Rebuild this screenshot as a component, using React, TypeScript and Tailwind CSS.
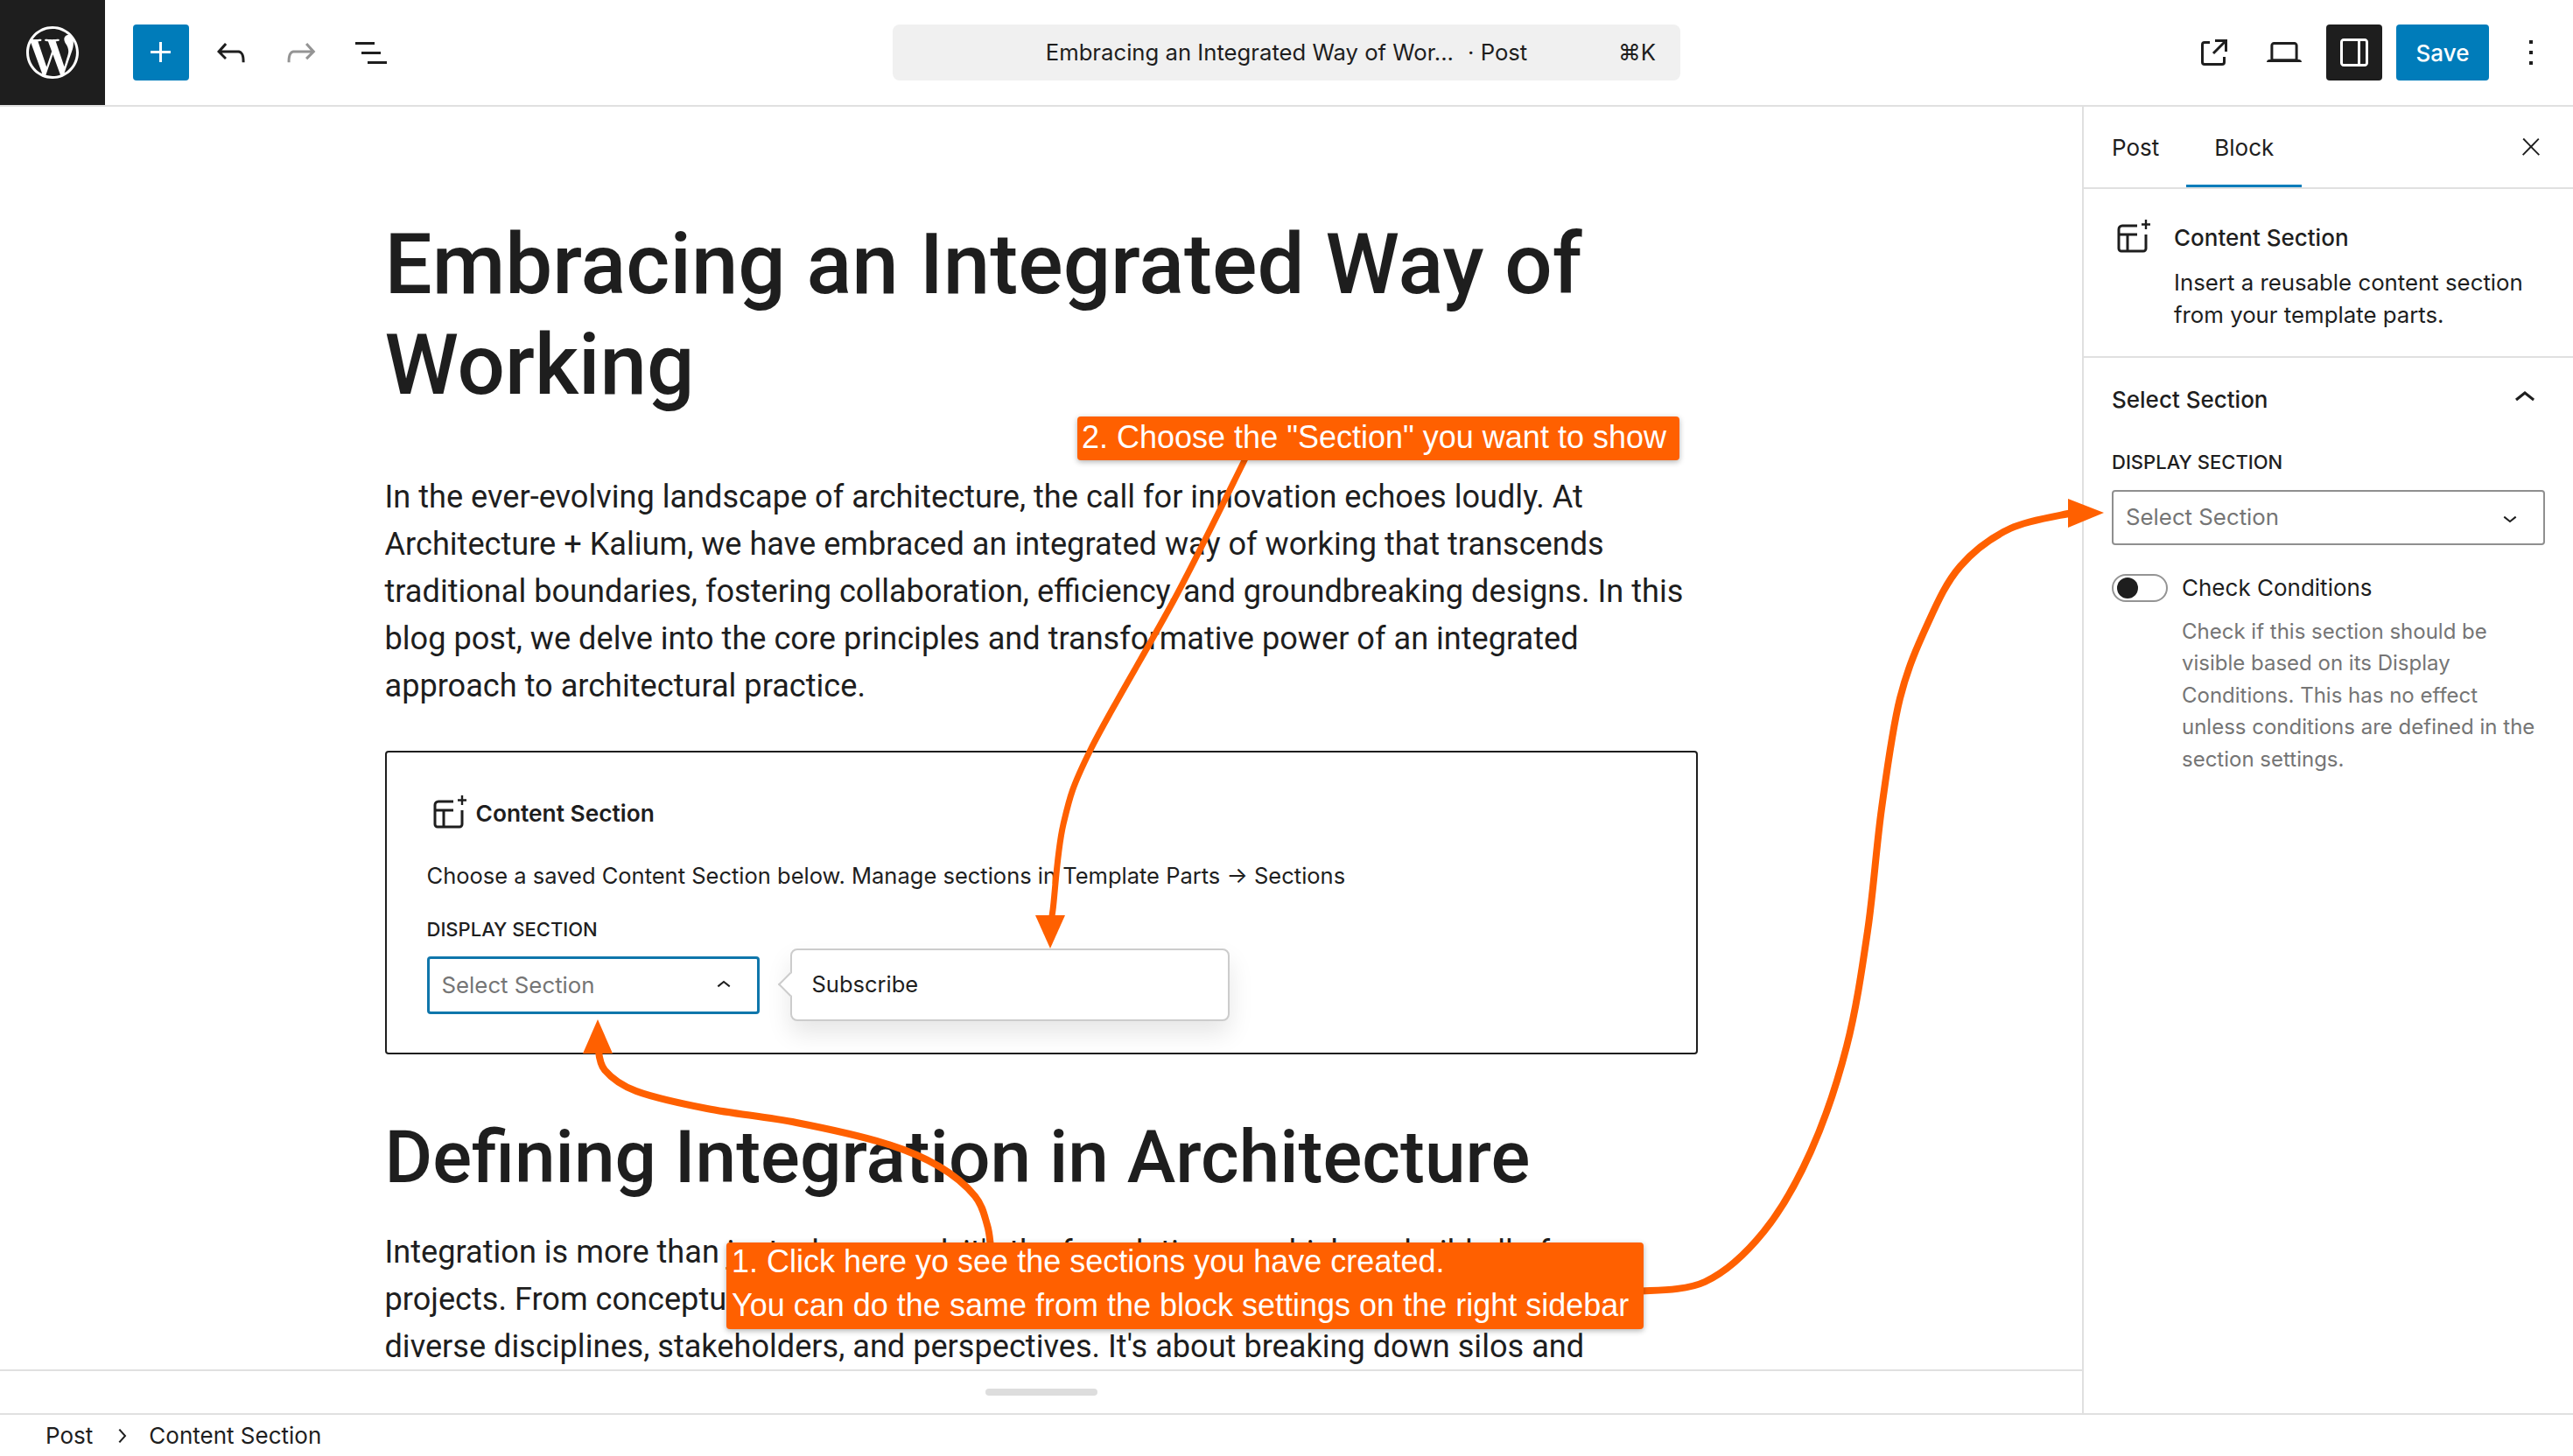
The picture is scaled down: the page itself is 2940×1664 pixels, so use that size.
import React from "react";
import { SiWordpress } from "react-icons/si";

const G = ({ d, size = "w-12 h-12", className = "" }: { d: string; size?: string; className?: string }) => (
  <svg viewBox="0 0 24 24" className={`${size} shrink-0 fill-current ${className}`}>
    <path d={d} />
  </svg>
);

const ic = {
  plus: "M11 12.5V17.5H12.5V12.5H17.5V11H12.5V6H11V11H6V12.5H11Z",
  undo: "M18.3 11.7c-.6-.6-1.4-.9-2.3-.9H6.7l2.9-3.3-1.1-1-4.5 5L8.5 16l1-1-2.7-2.7H16c.5 0 .9.2 1.3.5 1 1 1 3.4 1 4.5v.3h1.5v-.2c0-1.5 0-4.3-1.5-5.7z",
  redo: "M15.6 6.5l-1.1 1 2.9 3.3H8c-.9 0-1.7.3-2.3.9-1.4 1.5-1.4 4.2-1.4 5.7v.2h1.5v-.3c0-1.1 0-3.5 1-4.5.3-.3.7-.5 1.3-.5h9.2L14.5 15l1.1 1.1 4.6-4.6-4.6-5z",
  list: "M3 6h11v1.5H3V6Zm3.5 5.5h11V13h-11v-1.5ZM21 17H10v1.5h11V17Z",
  external: "M19.5 4.5h-7V6h4.44l-5.97 5.97 1.06 1.06L18 7.06v4.44h1.5v-7Zm-13 1a2 2 0 0 0-2 2v10a2 2 0 0 0 2 2h10a2 2 0 0 0 2-2v-3H17v3a.5.5 0 0 1-.5.5h-10a.5.5 0 0 1-.5-.5v-10a.5.5 0 0 1 .5-.5h3V5.5h-3Z",
  laptop: "M20.5 16h-.7V8c0-1.1-.9-2-2-2H6.2c-1.1 0-2 .9-2 2v8h-.7c-.8 0-1.5.7-1.5 1.5h20c0-.8-.7-1.5-1.5-1.5zM5.7 8c0-.3.2-.5.5-.5h11.6c.3 0 .5.2.5.5v7.6H5.7V8z",
  drawer: "M18 4H6c-1.1 0-2 .9-2 2v12c0 1.1.9 2 2 2h12c1.1 0 2-.9 2-2V6c0-1.1-.9-2-2-2zm-4 14.5H6c-.3 0-.5-.2-.5-.5V6c0-.3.2-.5.5-.5h8v13zm4.5-.5c0 .3-.2.5-.5.5h-2.5v-13H18c.3 0 .5.2.5.5v12z",
  more: "M13 19h-2v-2h2v2zm0-6h-2v-2h2v2zm0-6h-2V5h2v2z",
  close: "M13 11.8l6.1-6.3-1-1-6.1 6.2-6.1-6.3-1 1 6.1 6.3-6.5 6.7 1 1 6.5-6.6 6.5 6.6 1-1z",
  up: "M6.5 12.4L12 8l5.5 4.4-.9 1.2L12 10l-4.5 3.6-1-1.2z",
  down: "M17.5 11.6L12 16l-5.5-4.4.9-1.2L12 14l4.5-3.6 1 1.2z",
  right: "M10.6 6L9.4 7l4.6 5-4.6 5 1.2 1 5.4-6z",
};

const SectionIcon = () => (
  <svg viewBox="0 0 24 24" className="h-12 w-12 shrink-0 fill-none stroke-[#1e1e1e]" strokeWidth={1.5}>
    <path d="M15 5H6.5a2 2 0 0 0-2 2v11a1.5 1.5 0 0 0 1.5 1.5h12.5a1.5 1.5 0 0 0 1.5-1.5V10" />
    <path d="M4.5 10H15M9.5 10v9.5" />
    <path d="M20 1.5v5.5M17.5 4.25h5" strokeWidth={1.2} />
  </svg>
);

const smooth = (p: number[][]) => {
  let d = `M${p[0][0]} ${p[0][1]}`;
  for (let i = 0; i < p.length - 1; i++) {
    const a = p[Math.max(i - 1, 0)], b = p[i], c = p[i + 1], e = p[Math.min(i + 2, p.length - 1)];
    d += ` C${b[0] + (c[0] - a[0]) / 6} ${b[1] + (c[1] - a[1]) / 6} ${c[0] - (e[0] - b[0]) / 6} ${c[1] - (e[1] - b[1]) / 6} ${c[0]} ${c[1]}`;
  }
  return d;
};

const arrow1 = smooth([[1132, 1425], [1128, 1400], [1114, 1367], [1073, 1333], [1012, 1307], [910, 1283], [808, 1267], [727, 1247], [691, 1223], [683, 1195]]);
const arrow2 = smooth([[1424, 522], [1345, 679], [1246, 857], [1215, 942], [1203, 1040], [1200, 1052]]);
const arrow3 = smooth([[1870, 1476], [1948, 1465], [2015, 1408], [2069, 1316], [2110, 1196], [2134, 1064], [2150, 924], [2171, 798], [2203, 712], [2240, 647], [2297, 604], [2368, 586]]);

const SelectBox = ({ icon, className }: { icon: string; className: string }) => (
  <div className={`flex items-center justify-between rounded-[4px] bg-white pl-[14px] pr-[22px] text-[25.8px] text-[#757575] ${className}`}>
    <span>Select Section</span>
    <G d={icon} size="w-8 h-8" className="text-[#1e1e1e]" />
  </div>
);

export default function App() {
  return (
    <div className="relative flex h-[1664px] w-[2940px] flex-col overflow-hidden bg-white font-['Inter',sans-serif] text-[#1e1e1e]">
      <header className="grid h-[122px] shrink-0 grid-cols-[1fr_900px_1fr] items-center border-b-2 border-[#e0e0e0]">
        <div className="flex h-[120px] items-center">
          <div className="flex h-[120px] w-[120px] items-center justify-center bg-[#1e1e1e] text-white">
            <SiWordpress className="h-[60px] w-[60px]" />
          </div>
          <div className="ml-8 flex h-16 w-16 items-center justify-center rounded-[4px] bg-[#007cba] text-white">
            <G d={ic.plus} />
          </div>
          <div className="ml-6 flex items-center gap-8">
            <G d={ic.undo} />
            <G d={ic.redo} className="text-[#949494]" />
            <G d={ic.list} />
          </div>
        </div>
        <div className="relative flex h-16 items-center justify-center rounded-lg bg-[#f0f0f0] text-[25.7px]">
          <span>Embracing an Integrated Way of Wor...</span>
          <span className="ml-4">· Post</span>
          <span className="absolute right-[28px]">⌘K</span>
        </div>
        <div className="flex h-[120px] items-center justify-end">
          <G d={ic.external} />
          <G d={ic.laptop} className="ml-8" />
          <div className="ml-6 flex h-16 w-16 items-center justify-center rounded-[4px] bg-[#1e1e1e] text-white">
            <G d={ic.drawer} />
          </div>
          <div className="ml-4 flex h-16 w-[106px] items-center justify-center rounded-[4px] bg-[#007cba] text-[26px] font-medium text-white">
            Save
          </div>
          <G d={ic.more} className="ml-6 mr-6" />
        </div>
      </header>

      <main className="flex min-h-0 flex-1">
        <div className="flex min-w-0 flex-1 flex-col">
          <div className="min-h-0 flex-1 overflow-hidden">
            <div className="mx-auto w-[1500px] pt-[123px] font-['Roboto',sans-serif]">
              <h1 className="text-[96px] font-medium leading-[115px]">Embracing an Integrated Way of Working</h1>
              <p className="mt-[66px] text-[36.13px] leading-[54px]">
                In the ever-evolving landscape of architecture, the call for innovation echoes loudly. At Architecture + Kalium, we have embraced an integrated way of working that transcends traditional boundaries, fostering collaboration, efficiency, and groundbreaking designs. In this blog post, we delve into the core principles and transformative power of an integrated approach to architectural practice.
              </p>
              <section className="relative mt-[47px] rounded-[4px] border-2 border-[#1e1e1e] pb-[44px] pl-[46px] pt-[46px] font-['Inter',sans-serif]">
                <div className="flex items-center gap-2 text-[26.3px] font-semibold">
                  <SectionIcon />
                  <span>Content Section</span>
                </div>
                <p className="mt-[29px] text-[25.5px] leading-[36px]">Choose a saved Content Section below. Manage sections in Template Parts → Sections</p>
                <p className="mt-[28px] text-[22px] font-medium uppercase leading-[30px]">Display Section</p>
                <SelectBox icon={ic.up} className="mt-4 h-[66px] w-[380px] border-[3px] border-[#0f76ab]" />
                <div className="absolute left-[461px] top-[224px] flex h-[83px] w-[502px] items-center rounded-lg border-2 border-[#cccccc] bg-white pl-[23px] text-[25.5px] shadow-[0_14px_28px_rgba(0,0,0,0.1)]">
                  <span className="absolute left-[-12px] top-[29px] h-5 w-5 rotate-45 border-b-2 border-l-2 border-[#cccccc] bg-white" />
                  <span className="relative">Subscribe</span>
                </div>
              </section>
              <h2 className="mt-[69px] text-[83.75px] font-medium leading-[96px]">Defining Integration in Architecture</h2>
              <p className="mt-[34px] text-[36.13px] leading-[54px]">
                Integration is more than just a buzzword; it's the foundation on which we build all of
                <br />
                projects. From conceptualization to completion, we believe in bringing together
                <br />
                diverse disciplines, stakeholders, and perspectives. It's about breaking down silos and
              </p>
            </div>
          </div>
          <div className="flex h-[50px] shrink-0 items-center justify-center border-t-2 border-[#e0e0e0]">
            <div className="h-2 w-[128px] rounded-full bg-[#dddddd]" />
          </div>
        </div>

        <aside className="w-[561px] shrink-0 border-l-2 border-[#e0e0e0]">
          <div className="flex h-[94px] items-center justify-between border-b-2 border-[#e0e0e0] pr-8 text-[26px]">
            <div className="flex h-full">
              <div className="flex items-center pl-8 pr-[31px]">Post</div>
              <div className="flex items-center border-b-[3px] border-[#007cba] px-[32px] pt-[3px]">Block</div>
            </div>
            <G d={ic.close} size="w-8 h-8" />
          </div>
          <div className="flex gap-6 border-b-2 border-[#e0e0e0] pb-[29px] pl-[31px] pt-[32px]">
            <SectionIcon />
            <div className="pt-[6px]">
              <p className="text-[26px] font-medium leading-[36px]">Content Section</p>
              <p className="mt-[14px] text-[25.8px] leading-[37px]">Insert a reusable content section<br />from your template parts.</p>
            </div>
          </div>
          <div className="pl-[32px] pr-[31px] pt-[25px]">
            <div className="flex items-center justify-between">
              <span className="text-[26px] font-medium leading-[36px]">Select Section</span>
              <G d={ic.up} className="-mt-[3px]" />
            </div>
            <p className="mt-[34px] text-[22px] font-medium uppercase leading-[30px]">Display Section</p>
            <SelectBox icon={ic.down} className="mt-[17px] h-[63px] w-[495px] border-2 border-[#8f8f8f]" />
            <div className="mt-[33px] flex items-center gap-4">
              <div className="flex h-[32px] w-[64px] items-center rounded-full border-2 border-[#949494] pl-[4px]">
                <div className="h-6 w-6 rounded-full bg-[#1e1e1e]" />
              </div>
              <span className="text-[26px] leading-[32px]">Check Conditions</span>
            </div>
            <p className="ml-[80px] mt-[16px] w-[405px] text-[24px] leading-[36.4px] text-[#757575]">
              Check if this section should be visible based on its Display Conditions. This has no effect unless conditions are defined in the section settings.
            </p>
          </div>
        </aside>
      </main>

      <footer className="flex h-[49px] shrink-0 items-center border-t-2 border-[#e0e0e0] pl-[52px] text-[26px]">
        <span>Post</span>
        <G d={ic.right} size="w-8 h-8" className="ml-[17px] mr-[15px]" />
        <span>Content Section</span>
      </footer>

      <svg className="pointer-events-none absolute inset-0 h-[1664px] w-[2940px]" viewBox="0 0 2940 1664">
        <g fill="none" stroke="#ff6000" strokeLinecap="round">
          <path d={arrow1} strokeWidth={8} />
          <path d={arrow2} strokeWidth={7} />
          <path d={arrow3} strokeWidth={8} />
        </g>
        <g fill="#ff6000">
          <polygon points="683,1165 666,1204 700,1204" />
          <polygon points="1200,1084 1183,1046 1217,1046" />
          <polygon points="2404,586 2363,570 2363,603" />
        </g>
      </svg>
      <div className="absolute left-[1231px] top-[476px] flex h-[50px] w-[688px] items-center whitespace-nowrap rounded-[4px] bg-[#ff6000] pb-[2px] pl-[5px] font-['Liberation_Sans',sans-serif] text-[36px] text-white shadow-[0_2px_6px_rgba(0,0,0,0.3)]">
        2. Choose the "Section" you want to show
      </div>
      <div className="absolute left-[830px] top-[1420px] h-[99px] w-[1048px] whitespace-nowrap rounded-[4px] bg-[#ff6000] pl-[6px] font-['Liberation_Sans',sans-serif] text-[36px] leading-[50px] text-white shadow-[0_2px_6px_rgba(0,0,0,0.3)]">
        <div className="-mt-[3px]">
          1. Click here yo see the sections you have created.
          <br />
          You can do the same from the block settings on the right sidebar
        </div>
      </div>
    </div>
  );
}
